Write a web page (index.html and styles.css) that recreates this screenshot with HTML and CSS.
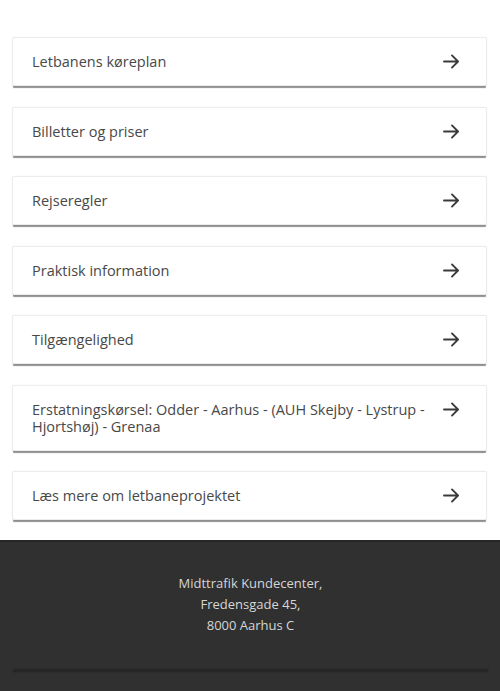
FILE: index.html
```html
<!DOCTYPE html>
<html lang="da">
<head>
<meta charset="utf-8">
<link rel="stylesheet" href="styles.css">
</head>
<body>
<main class="links">
  <a class="card" href="#"><span class="label">Letbanens køreplan</span><svg class="arrow" viewBox="0 0 18 16"><path d="M1 8h15M9.5 1.5 16 8l-6.5 6.5"/></svg></a>
  <a class="card" href="#"><span class="label">Billetter og priser</span><svg class="arrow" viewBox="0 0 18 16"><path d="M1 8h15M9.5 1.5 16 8l-6.5 6.5"/></svg></a>
  <a class="card" href="#"><span class="label">Rejseregler</span><svg class="arrow" viewBox="0 0 18 16"><path d="M1 8h15M9.5 1.5 16 8l-6.5 6.5"/></svg></a>
  <a class="card" href="#"><span class="label">Praktisk information</span><svg class="arrow" viewBox="0 0 18 16"><path d="M1 8h15M9.5 1.5 16 8l-6.5 6.5"/></svg></a>
  <a class="card" href="#"><span class="label">Tilgængelighed</span><svg class="arrow" viewBox="0 0 18 16"><path d="M1 8h15M9.5 1.5 16 8l-6.5 6.5"/></svg></a>
  <a class="card" href="#"><span class="label">Erstatningskørsel: Odder - Aarhus - (AUH Skejby - Lystrup - Hjortshøj) - Grenaa</span><svg class="arrow" viewBox="0 0 18 16"><path d="M1 8h15M9.5 1.5 16 8l-6.5 6.5"/></svg></a>
  <a class="card" href="#"><span class="label">Læs mere om letbaneprojektet</span><svg class="arrow" viewBox="0 0 18 16"><path d="M1 8h15M9.5 1.5 16 8l-6.5 6.5"/></svg></a>
</main>
<footer class="footer">
  <address class="address">Midttrafik Kundecenter,<br>Fredensgade 45,<br>8000 Aarhus C</address>
  <hr class="divider">
</footer>
</body>
</html>
```

FILE: styles.css
```css
* { box-sizing: border-box; }
html, body { margin: 0; padding: 0; background: #fff; }
body { font-family: "Open Sans", "Noto Sans", sans-serif; }

.links {
  display: flex;
  flex-direction: column;
  gap: 20.5px;
  padding: 37px 13px 20px 12px;
}

.card {
  display: flex;
  align-items: flex-start;
  justify-content: space-between;
  gap: 14px;
  padding: 15px 26px 15px 19px;
  background: #fff;
  border: 1px solid #ececec;
  border-radius: 2px;
  box-shadow: 0 3px 1px -1px #8f8f8f, 0 0 2px rgba(0,0,0,0.06);
  color: #484848;
  text-decoration: none;
  font-size: 14.5px;
  line-height: 17px;
}

.label { flex: 1; display: block; padding-right: 2px; }

.arrow {
  flex: none;
  display: block;
  width: 17px;
  height: 15px;
  margin-top: 1px;
  fill: none;
  stroke: #3a3a3a;
  stroke-width: 2;
  stroke-linecap: round;
  stroke-linejoin: round;
}

.footer {
  background: #303030;
  padding: 31px 12px 20px 13px;
  border-top: 2px solid #262626;
}

.address {
  font-style: normal;
  text-align: center;
  color: #d6d6d6;
  font-size: 13px;
  line-height: 21px;
}

.divider {
  margin: 33px 0 0;
  border: 0;
  height: 3px;
  background: #262626;
  border-radius: 2px;
  box-shadow: 0 0 2px #262626;
}
```
